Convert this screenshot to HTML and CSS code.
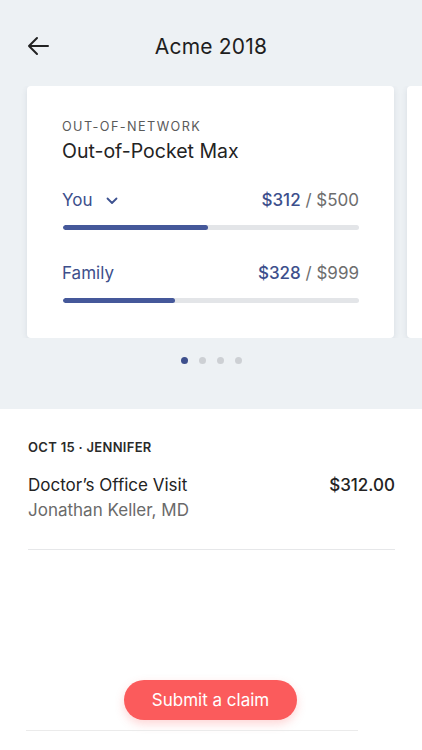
FILE: index.html
```html
<!DOCTYPE html>
<html>
<head>
<meta charset="utf-8">
<link rel="stylesheet" href="styles.css">
</head>
<body>
<div class="top">
  <header class="header">
    <svg class="back" width="24" height="20" viewBox="0 0 24 20"><path d="M22 10H3M11 2L3 10l8 8" fill="none" stroke="#222" stroke-width="2" stroke-linecap="round" stroke-linejoin="round"/></svg>
    <h1 class="title">Acme 2018</h1>
  </header>
  <div class="carousel">
    <div class="card">
      <div class="eyebrow">OUT-OF-NETWORK</div>
      <div class="card-title">Out-of-Pocket Max</div>
      <div class="row you">
        <span class="who">You <svg class="chev" width="12" height="8" viewBox="0 0 12 8"><path d="M1.5 1.5L6 6l4.5-4.5" fill="none" stroke="#3d5290" stroke-width="1.8" stroke-linecap="round" stroke-linejoin="round"/></svg></span>
        <span class="amt"><b>$312</b> / $500</span>
      </div>
      <div class="track"><div class="fill" style="width:49%"></div></div>
      <div class="row fam">
        <span class="who">Family</span>
        <span class="amt"><b>$328</b> / $999</span>
      </div>
      <div class="track"><div class="fill" style="width:38%"></div></div>
    </div>
    <div class="card"></div>
  </div>
  <div class="dots"><span class="dot on"></span><span class="dot"></span><span class="dot"></span><span class="dot"></span></div>
</div>
<main class="list">
  <div class="claim">
    <div class="meta">OCT 15 · JENNIFER</div>
    <div class="claim-row"><span class="claim-name">Doctor’s Office Visit</span><span class="claim-amt">$312.00</span></div>
    <div class="provider">Jonathan Keller, MD</div>
  </div>
</main>
<div class="footer">
  <button class="submit">Submit a claim</button>
  <div class="footer-line"></div>
</div>
</body>
</html>
```
FILE: styles.css
```css
* { box-sizing: border-box; }
html, body { margin: 0; padding: 0; }
body {
  width: 422px;
  height: 750px;
  overflow: hidden;
  background: #fff;
  font-family: Inter, "Noto Sans", sans-serif;
  color: #222;
  position: relative;
}
.top {
  background: #edf1f4;
  height: 409px;
  padding-top: 30px;
}
.header {
  display: flex;
  align-items: center;
  height: 32px;
  padding-left: 26px;
  position: relative;
}
.back { display: block; }
.title {
  position: absolute;
  left: 0; right: 0;
  text-align: center;
  margin: 0;
  font-size: 21px;
  font-weight: 400;
  letter-spacing: 0.2px;
  color: #1e1e1e;
  pointer-events: none;
}
.carousel {
  display: flex;
  gap: 13px;
  margin-top: 24px;
  padding-left: 27px;
  overflow: hidden;
}
.card {
  flex: 0 0 367px;
  height: 252px;
  background: #fff;
  border-radius: 4px;
  box-shadow: 0 2px 6px rgba(40, 60, 90, 0.10);
  padding: 33px 35px 0 35px;
}
.eyebrow {
  font-size: 12.7px;
  letter-spacing: 1.4px;
  color: #5a5a5a;
  line-height: 16px;
}
.card-title {
  font-size: 19.5px;
  line-height: 24px;
  margin-top: 4px;
  color: #232323;
}
.row {
  display: flex;
  justify-content: space-between;
  align-items: center;
  line-height: 22px;
  font-size: 17px;
}
.row.you { margin-top: 26px; }
.row.fam { margin-top: 32px; }
.who { color: #3d4f8c; display: flex; align-items: center; gap: 14px; }
.chev { margin-top: 1px; }
.amt { color: #6d6d6d; }
.amt b { color: #3d4f8c; font-weight: 500; }
.track {
  height: 5px;
  background: #e3e5e8;
  border-radius: 3px;
  margin-top: 14px;
  margin-left: 1px;
  overflow: hidden;
}
.fill {
  height: 100%;
  background: #45589a;
  border-radius: 3px;
}
.dots {
  display: flex;
  justify-content: center;
  gap: 11px;
  margin-top: 19px;
}
.dot {
  width: 7px; height: 7px;
  border-radius: 50%;
  background: #cdd0d4;
}
.dot.on { background: #3d4f8c; }
.list { padding: 30px 27px 0 28px; }
.claim {
  border-bottom: 1px solid #e6e7e9;
  padding-bottom: 28px;
}
.meta {
  font-size: 13px;
  font-weight: 600;
  letter-spacing: 0.3px;
  color: #2a2a2a;
  line-height: 16px;
}
.claim-row {
  display: flex;
  justify-content: space-between;
  margin-top: 19px;
  font-size: 17px;
  line-height: 22px;
  color: #232323;
}
.claim-amt { font-weight: 500; }
.provider {
  font-size: 17px;
  line-height: 22px;
  color: #6a6a6a;
  margin-top: 3px;
}
.footer {
  position: absolute;
  left: 0; right: 0;
  bottom: 0;
  height: 70px;
}
.submit {
  display: block;
  margin: 0 auto 0 124px;
  width: 173px;
  height: 40px;
  border: none;
  border-radius: 20px;
  background: #fb5b5c;
  color: #fff;
  font-family: Inter, "Noto Sans", sans-serif;
  font-size: 17px;
  box-shadow: 0 4px 10px rgba(251, 91, 92, 0.25);
  padding: 0;
}
.footer-line {
  margin: 10px 0 0 26px;
  width: 332px;
  height: 1px;
  background: #ebebeb;
}
```
